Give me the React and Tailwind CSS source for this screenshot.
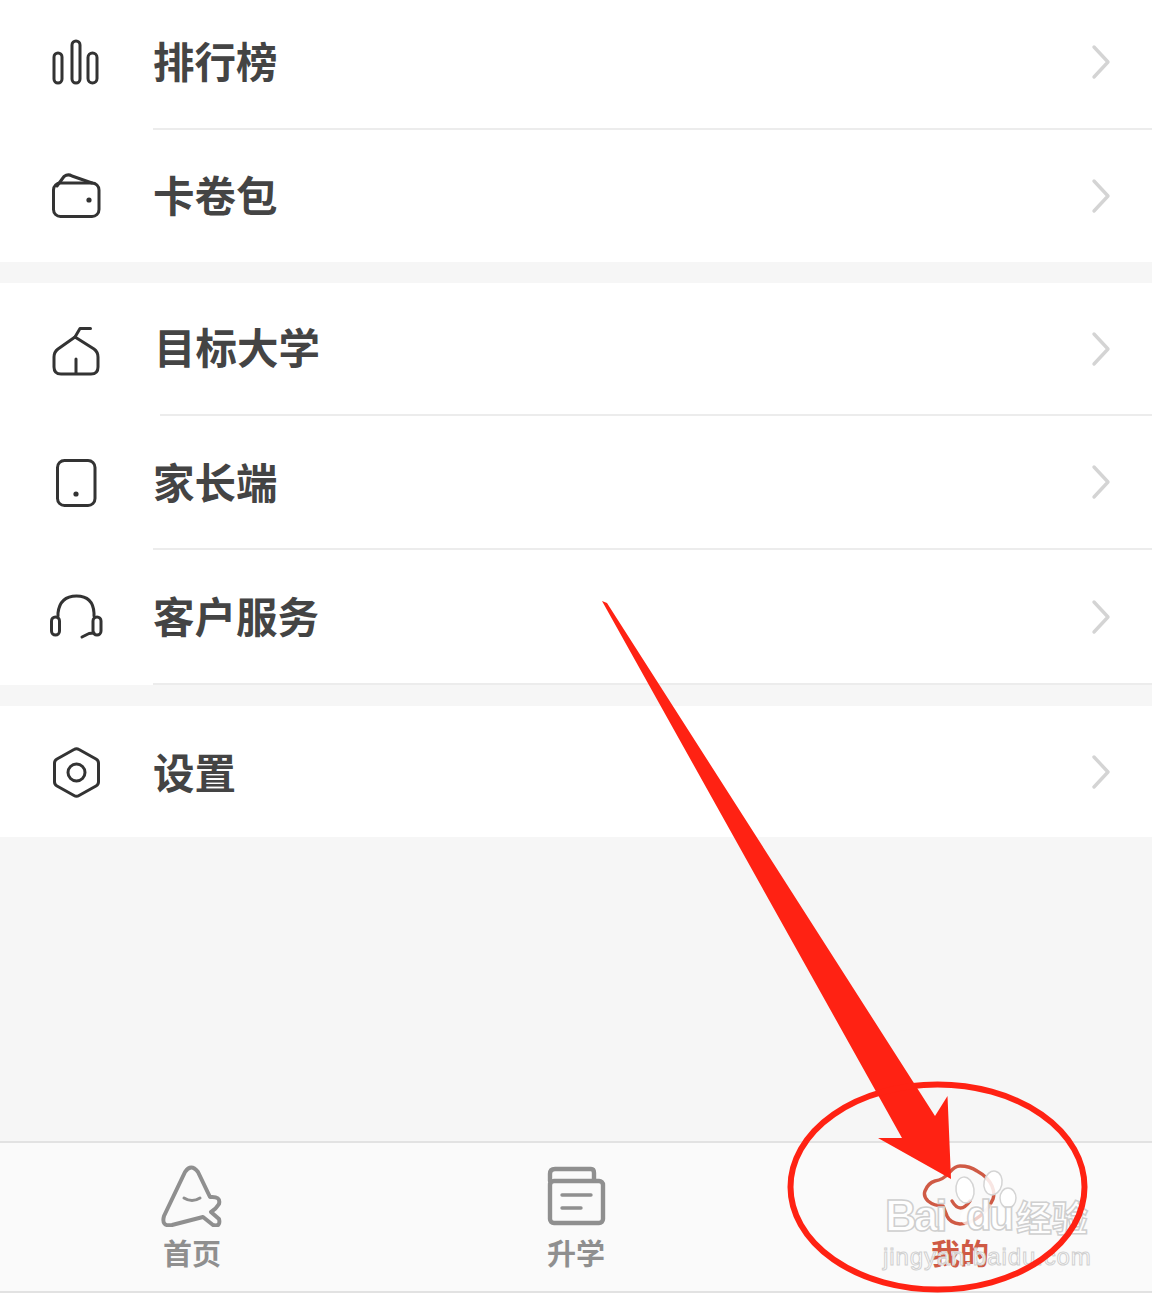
// Settings list page with a red arrow annotation and a watermark on top
const stroke = { fill: 'none', stroke: '#333333', strokeWidth: 3, strokeLinecap: 'round', strokeLinejoin: 'round' };

const BarsIcon = () => (
  <svg width="56" height="56" viewBox="49 37 56 56" {...stroke}>
    <rect x="54" y="53" width="8" height="30" rx="4" />
    <rect x="72" y="41" width="8" height="42" rx="4" />
    <rect x="88" y="53" width="9" height="30" rx="4.5" />
  </svg>
);

const WalletIcon = () => (
  <svg width="56" height="56" viewBox="49 168 56 56" {...stroke}>
    <rect x="53.5" y="183" width="45.5" height="33.5" rx="7" />
    <path d="M57 186 L64 176.5 Q68 173.5 72 176 L92 183" />
    <circle cx="89" cy="200" r="2.6" fill="#333333" stroke="none" />
  </svg>
);

const HouseIcon = () => (
  <svg width="56" height="56" viewBox="49 321 56 56" {...stroke}>
    <path d="M75 336 L58 348 Q54 351 54 356 L54 366 Q54 373 61 373 L91 373 Q98 373 98 366 L98 356 Q98 351 94 348 Z" />
    <path d="M75 336 L80 327.5 L90.5 327.5" />
    <path d="M76 358 L76 372" />
  </svg>
);

const PhoneIcon = () => (
  <svg width="56" height="56" viewBox="49 455 56 56" {...stroke}>
    <rect x="57.5" y="460.5" width="37.5" height="45" rx="7" />
    <circle cx="76" cy="494" r="2.6" fill="#333333" stroke="none" />
  </svg>
);

const HeadsetIcon = () => (
  <svg width="56" height="56" viewBox="49 589 56 56" {...stroke}>
    <path d="M58 615 L58 612 Q60 595 76.5 595 Q93 595 94 612 L94 615" />
    <rect x="51.5" y="616" width="8" height="18" rx="4" />
    <rect x="93" y="616" width="8" height="18" rx="4" />
    <path d="M82 636 L89 632.5 L94 632" />
  </svg>
);

const HexIcon = () => (
  <svg width="56" height="56" viewBox="49 743 56 56" {...stroke}>
    <path d="M74 748.5 Q76.5 747 79 748.5 L96 758 Q98.5 759.5 98.5 762 L98.5 781 Q98.5 783.5 96 785 L79 794.5 Q76.5 796 74 794.5 L57 785 Q54.5 783.5 54.5 781 L54.5 762 Q54.5 759.5 57 758 Z" />
    <circle cx="76.5" cy="771.5" r="8.5" />
  </svg>
);

const Chevron = ({ className = '' }) => (
  <svg className={className} width="20" height="36" viewBox="0 0 20 36" fill="none" stroke="#d4d4d4" strokeWidth="3.4" strokeLinecap="round" strokeLinejoin="round">
    <path d="M3 3 L17 18 L3 33" />
  </svg>
);

const Row = ({ icon, label, h, line, lineInset = '', textClass = '', chevronClass = '' }) => (
  <div className="flex bg-white" style={{ height: h }}>
    <div className="w-[153px] shrink-0 flex items-center justify-center">{icon}</div>
    <div className={`flex-1 flex items-center justify-between pr-[41px] ${line ? 'border-b-2 border-[#ececec]' : ''} ${lineInset}`}>
      <span className={`text-[41.5px] font-bold leading-none text-[#444444] ${textClass}`}>{label}</span>
      <Chevron className={chevronClass} />
    </div>
  </div>
);

const HomeTab = () => (
  <svg width="64" height="64" viewBox="160 1164 64 64" fill="none" stroke="#8f8f8f" strokeWidth="4" strokeLinecap="round" strokeLinejoin="round">
    <path d="M185 1173 Q191 1164 198 1173 L210 1198 Q221 1197 219 1205 Q216 1210 211 1213 L219 1220 Q221 1228 213 1226 L203 1218 L172 1226 Q161 1228 164 1217 Z" />
    <path d="M184 1199 Q192 1204 200 1199" strokeWidth="3" />
  </svg>
);

const DocTab = () => (
  <svg width="64" height="64" viewBox="545 1164 64 64" fill="none" stroke="#8f8f8f" strokeWidth="4.4" strokeLinecap="round" strokeLinejoin="round">
    <rect x="551" y="1182" width="53" height="42" rx="4" />
    <path d="M551 1182 L551 1175 Q551 1170 556 1170 L592 1170 Q595 1170 595 1174 L595 1181" />
    <path d="M563 1196 L592 1196 M563 1209 L582 1209" strokeWidth="3.4" />
  </svg>
);

const CloudTab = () => (
  <svg width="76" height="64" viewBox="922 1164 76 64" fill="none" stroke="#cf5a45" strokeWidth="3.4" strokeLinecap="round" strokeLinejoin="round">
    <path d="M935 1182 Q943 1181 950 1173 Q955 1167 960 1167 Q970 1167 977 1172 Q988 1178 992 1187 Q995 1194 993 1200 Q988 1211 980 1217 Q970 1225 960 1225 Q950 1224 947 1217 Q945 1212 943 1207 Q934 1207 928 1202 Q923 1197 925 1192 Q928 1184 935 1182 Z" />
    <path d="M952 1202 Q960 1216 970 1202" />
  </svg>
);

const Tab = ({ icon, label, color }) => (
  <div className="flex flex-col items-center">
    {icon}
    <span className={`mt-[7px] text-[29px] font-bold leading-[36px] ${color}`}>{label}</span>
  </div>
);

// paw of the watermark, sits on the tab bar and under the annotation
const WatermarkPaw = () => (
  <svg className="absolute inset-0" width="1152" height="1293" viewBox="0 0 1152 1293">
    <ellipse cx="985" cy="1217" rx="25" ry="13" fill="#ffffff" fillOpacity="0.7" />
    <g fill="#ffffff" fillOpacity="0.85" stroke="#d4d4d4" strokeWidth="1.5">
      <ellipse cx="965" cy="1190" rx="9" ry="13" transform="rotate(-8 965 1190)" />
      <ellipse cx="993" cy="1183" rx="9" ry="12" transform="rotate(12 993 1183)" />
      <ellipse cx="1008" cy="1198" rx="8" ry="10" />
    </g>
  </svg>
);

// red arrow and ellipse drawn over the screenshot
const Annotation = () => (
  <svg className="absolute inset-0" width="1152" height="1293" viewBox="0 0 1152 1293" fill="none">
    <polygon points="602,601 607,603 935,1116 947.5,1096 951,1179 878,1138 902,1138" fill="#ff2213" />
    <ellipse cx="937.5" cy="1187" rx="147" ry="102.5" stroke="#ff2213" strokeWidth="6" />
  </svg>
);

const Watermark = () => (
  <>
    <div className="absolute left-[885px] top-[1191px] text-[44px] font-bold leading-[50px] tracking-[-3px] text-white/85 [-webkit-text-stroke:1.5px_#cfcfcf] font-['Liberation_Sans',sans-serif]">
      Bai
    </div>
    <div className="absolute left-[966px] top-[1191px] text-[42px] font-bold leading-[50px] tracking-[-3px] text-white/85 [-webkit-text-stroke:1.5px_#cfcfcf] font-['Liberation_Sans',sans-serif]">
      du
    </div>
    <div className="absolute left-[1016px] top-[1195px] text-[36px] font-bold leading-[42px] text-white/85 [-webkit-text-stroke:1.5px_#cfcfcf]">
      经验
    </div>
    <div className="absolute left-[883px] top-[1242px] text-[24px] leading-[30px] tracking-[0.9px] text-white/85 [-webkit-text-stroke:1px_#d0d0d0] font-['Liberation_Sans',sans-serif]">
      jingyan.baidu.com
    </div>
  </>
);

export default function App() {
  return (
    <div className="relative w-[1152px] h-[1293px] overflow-hidden flex flex-col bg-[#f6f6f6] font-['Noto_Sans_CJK_SC','Noto_Sans',sans-serif]">
      <Row icon={<BarsIcon />} label="排行榜" h={130} line textClass="mb-[7px]" chevronClass="mb-[4px]" />
      <Row icon={<WalletIcon />} label="卡卷包" h={132} textClass="mb-[3px]" />
      <div className="h-[21px]" />
      <Row icon={<HouseIcon />} label="目标大学" h={133} line lineInset="ml-[7px]" textClass="mb-[3px] ml-[-6px]" />
      <Row icon={<PhoneIcon />} label="家长端" h={134} line />
      <Row icon={<HeadsetIcon />} label="客户服务" h={135} line textClass="mb-[1px]" />
      <div className="h-[21px]" />
      <Row icon={<HexIcon />} label="设置" h={131} />
      <div className="flex-1" />
      <div className="h-[152px] grid grid-cols-3 items-start pt-[20px] bg-[#fafafa] border-t-2 border-b-2 border-[#e2e2e2]">
        <Tab icon={<HomeTab />} label="首页" color="text-[#8f8f8f]" />
        <Tab icon={<DocTab />} label="升学" color="text-[#8f8f8f]" />
        <Tab icon={<CloudTab />} label="我的" color="text-[#cf5a45]" />
      </div>
      <WatermarkPaw />
      <Watermark />
      <Annotation />
    </div>
  );
}
